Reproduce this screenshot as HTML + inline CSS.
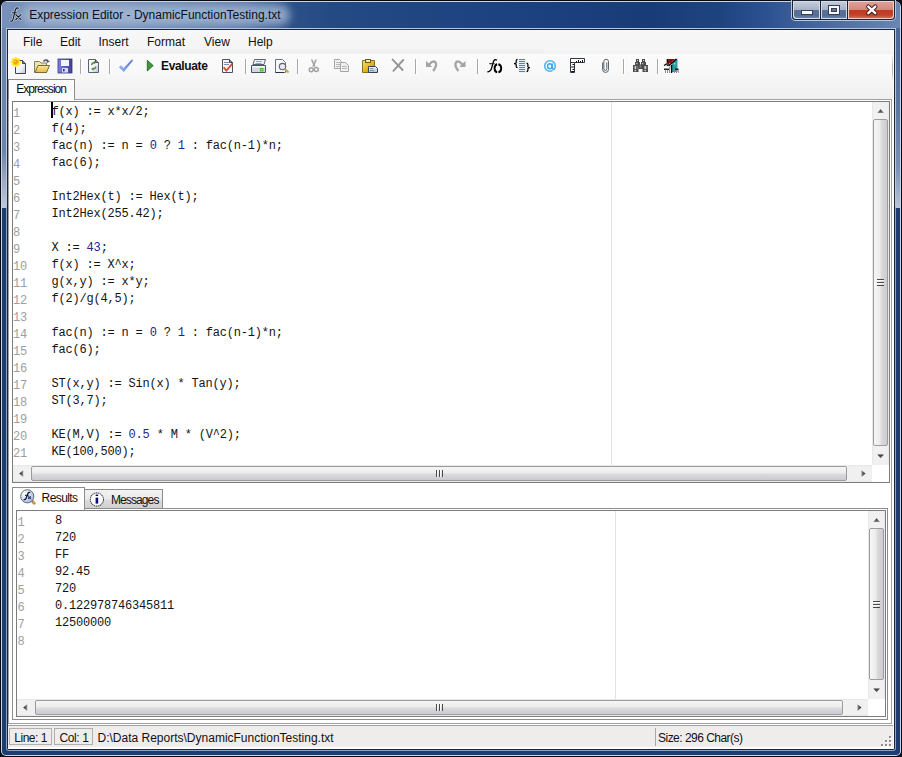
<!DOCTYPE html>
<html><head><meta charset="utf-8">
<style>
*{margin:0;padding:0;box-sizing:border-box}
html,body{width:902px;height:757px;overflow:hidden;background:#0b111c}
body{position:relative;font-family:"Liberation Sans",sans-serif;font-size:12px;color:#000}
.a{position:absolute}
.mono{font-family:"Liberation Mono",monospace}
.mono b{font-weight:normal;color:#24248a}
</style></head><body>
<!-- window frame -->
<div class="a" style="left:0;top:0;width:902px;height:757px;background:#05080e;border-radius:7px 7px 6px 6px"></div>
<div class="a" style="left:1px;top:1px;width:900px;height:755px;background:#c8d6ea;border-radius:6px 6px 5px 5px"></div>
<div class="a" id="fill" style="left:2px;top:2px;width:898px;height:753px;background:#1c3c72;border-radius:5px 5px 4px 4px;overflow:hidden">
  <div class="a" style="left:0;top:0;width:898px;height:206px;background:linear-gradient(180deg,#6e88b0 0px,#6a84aa 148px,#9ca8c0 178px,#bcc6da 205px)"></div>
  <div class="a" style="left:893px;top:26px;width:5px;height:180px;background:linear-gradient(180deg,#4a6898 0px,#5a78a4 80px,#7a92b8 140px,#a8b8d0 170px,#bcc6da 180px)"></div>
  <div class="a" style="left:0;top:0;width:898px;height:26px;background:linear-gradient(90deg,#7690b9 0px,#7690b9 120px,#5a78a8 240px,#2c5088 290px,#244a84 330px,#1c4280 500px,#183c78 650px,#1e4480 720px,#2a5090 760px,#3a5c98 790px,#6a86b2 898px)"></div>
  <div class="a" style="left:20px;top:3px;width:268px;height:20px;background:rgba(168,186,214,.8);border-radius:10px;filter:blur(4px)"></div>
</div>
<!-- inner frame lines -->
<div class="a" style="left:6px;top:28px;width:890px;height:723px;border-radius:0 0 3px 3px;background:linear-gradient(180deg,#b4c6de 0px,#bccae0 179px,#8aa4c8 180px,#8aa4c8 723px)"></div>
<div class="a" style="left:7px;top:29px;width:888px;height:721px;background:#1a2436;border-radius:0 0 2px 2px"></div>
<!-- title -->
<svg class="a" style="left:0;top:0" width="30" height="30" viewBox="0 0 30 30">
<g fill="none" stroke-linecap="round">
<path d="M18.4 8.2 Q17 7.4 15.8 9 Q15 10.5 14.2 14.5 Q13.2 19.5 12.4 20.6 Q11.6 21.6 10.6 21" stroke="#ffffff" stroke-opacity=".55" stroke-width="2.6"/>
<path d="M12.3 12.8 H16.4 M15.8 14.6 L21 19.6 M21 14.6 L15.8 19.6" stroke="#ffffff" stroke-opacity=".55" stroke-width="2.4"/>
<path d="M18.4 8.2 Q17 7.4 15.8 9 Q15 10.5 14.2 14.5 Q13.2 19.5 12.4 20.6 Q11.6 21.6 10.6 21" stroke="#101418" stroke-width="1.15"/>
<path d="M12.3 12.8 H16.4" stroke="#101418" stroke-width="1"/>
<path d="M15.8 14.6 L21 19.6 M21 14.6 L15.8 19.6" stroke="#101418" stroke-width="1.2"/>
</g></svg>
<div class="a" style="left:29.2px;top:7px;font-size:12px;line-height:16px;color:#0a0f1a;white-space:nowrap">Expression Editor - DynamicFunctionTesting.txt</div>
<!-- caption buttons -->
<svg class="a" id="caps" style="left:780px;top:0" width="122" height="24" viewBox="780 0 122 24">
<defs>
<linearGradient id="cb" x1="0" y1="0" x2="0" y2="1"><stop offset="0" stop-color="#c0cad8"/><stop offset="0.5" stop-color="#a4b2c6"/><stop offset="0.5" stop-color="#5a7298"/><stop offset="0.85" stop-color="#566e96"/><stop offset="1" stop-color="#6a84aa"/></linearGradient>
<linearGradient id="cr" x1="0" y1="0" x2="0" y2="1"><stop offset="0" stop-color="#e0a098"/><stop offset="0.5" stop-color="#d4867a"/><stop offset="0.5" stop-color="#c23a20"/><stop offset="0.8" stop-color="#c24028"/><stop offset="1" stop-color="#cc6a58"/></linearGradient>
</defs>
<path d="M791.5 0 V17 Q791.5 20.5 795 20.5 H891 Q895.5 20.5 895.5 16 V0" fill="none" stroke="#b8c8dc" stroke-width="1"/>
<path d="M792 0 H895 V16 Q895 20 891 20 H796 Q792 20 792 16 Z" fill="#1a2232"/>
<path d="M793 1 H820 V19 H796 Q793 19 793 16 Z" fill="#d4dce8"/>
<path d="M794 2 H819 V18 H797 Q794 18 794 15 Z" fill="url(#cb)"/>
<rect x="821" y="1" width="26" height="18" fill="#d4dce8"/>
<rect x="822" y="2" width="24" height="16" fill="url(#cb)"/>
<path d="M848 1 H894 V16 Q894 19 891 19 H848 Z" fill="#f0d0c8"/>
<path d="M849 2 H893 V15 Q893 18 890 18 H849 Z" fill="url(#cr)"/>
<rect x="801.5" y="10.5" width="11" height="4" fill="#f6f8fb" stroke="#34405a" stroke-width="1"/>
<rect x="828.5" y="5.5" width="11" height="9" fill="#f6f8fb" stroke="#34405a" stroke-width="1"/>
<rect x="831.5" y="8.5" width="5" height="3" fill="#6a7488" stroke="#34405a" stroke-width="1"/>
<path d="M868.3 6.6 L875.3 13.2 M875.3 6.6 L868.3 13.2" stroke="#3a1a18" stroke-width="4.2" stroke-linecap="round"/>
<path d="M868.3 6.6 L875.3 13.2 M875.3 6.6 L868.3 13.2" stroke="#fbfbfb" stroke-width="2.4" stroke-linecap="round"/>
</svg>
<!-- client -->
<div class="a" id="client" style="left:8px;top:30px;width:886px;height:719px;background:#fdfdfd;overflow:hidden"></div>
<!-- menu bar -->
<div class="a" style="left:8px;top:30px;width:885px;height:24px;background:linear-gradient(180deg,#f7f7f7 0px,#f5f5f5 19px,#f3f3f3 24px)"></div>
<div class="a" style="left:8px;top:49px;width:536px;height:5px;background:linear-gradient(180deg,#f2f2f2,#efefef)"></div>
<div class="a" style="left:8px;top:54px;width:885px;height:45px;background:linear-gradient(180deg,#fbfbfb 0px,#f8f8f8 18px,#f0f0f0 45px)"></div>
<div class="a" style="left:892px;top:56px;width:1px;height:24px;background:linear-gradient(180deg,#f0f0f0,#b8b8b8 40%,#b8b8b8 70%,#f0f0f0)"></div>
<div class="a" style="left:23px;top:35px;line-height:14px;color:#111">File</div>
<div class="a" style="left:60px;top:35px;line-height:14px;color:#111">Edit</div>
<div class="a" style="left:98.5px;top:35px;line-height:14px;color:#111">Insert</div>
<div class="a" style="left:147px;top:35px;line-height:14px;color:#111">Format</div>
<div class="a" style="left:204px;top:35px;line-height:14px;color:#111">View</div>
<div class="a" style="left:248px;top:35px;line-height:14px;color:#111">Help</div>
<!-- TOOLBAR -->
<svg class="a" style="left:0;top:0" width="902" height="100" viewBox="0 0 902 100">
<defs>
<linearGradient id="pg" x1="0" y1="0" x2="1" y2="1"><stop offset="0" stop-color="#ffffff"/><stop offset="0.6" stop-color="#f0f2fa"/><stop offset="1" stop-color="#b8bcd8"/></linearGradient>
<radialGradient id="sun" cx="0.5" cy="0.5" r="0.5"><stop offset="0" stop-color="#ffe060"/><stop offset="0.45" stop-color="#f0a000"/><stop offset="0.75" stop-color="#ffd820"/><stop offset="1" stop-color="#fff080" stop-opacity="0.3"/></radialGradient>
<linearGradient id="fold" x1="0" y1="0" x2="0" y2="1"><stop offset="0" stop-color="#f8e8a0"/><stop offset="1" stop-color="#e8b840"/></linearGradient>
<linearGradient id="flop" x1="0" y1="0" x2="1" y2="0"><stop offset="0" stop-color="#8080e8"/><stop offset="1" stop-color="#40409a"/></linearGradient>
<linearGradient id="chk" x1="0" y1="0" x2="1" y2="0"><stop offset="0" stop-color="#a0c0f8"/><stop offset="0.5" stop-color="#7098e8"/><stop offset="1" stop-color="#4068c8"/></linearGradient>
<linearGradient id="gold" x1="0" y1="0" x2="1" y2="1"><stop offset="0" stop-color="#f0e080"/><stop offset="0.5" stop-color="#e8b820"/><stop offset="1" stop-color="#b08010"/></linearGradient>
<linearGradient id="paper" x1="0" y1="0" x2="0" y2="1"><stop offset="0" stop-color="#f0f4fc"/><stop offset="1" stop-color="#b8c0d0"/></linearGradient>
</defs>
<!-- separators -->
<g fill="#a8a8a8"><rect x="80" y="59" width="1" height="15"/><rect x="109" y="59" width="1" height="15"/><rect x="245" y="59" width="1" height="15"/><rect x="297" y="59" width="1" height="15"/><rect x="415" y="59" width="1" height="15"/><rect x="477" y="59" width="1" height="15"/><rect x="623" y="59" width="1" height="15"/><rect x="657" y="59" width="1" height="15"/></g><g fill="#ffffff"><rect x="81" y="59" width="1" height="15"/><rect x="110" y="59" width="1" height="15"/><rect x="246" y="59" width="1" height="15"/><rect x="298" y="59" width="1" height="15"/><rect x="416" y="59" width="1" height="15"/><rect x="478" y="59" width="1" height="15"/><rect x="624" y="59" width="1" height="15"/><rect x="658" y="59" width="1" height="15"/></g>
<!-- new -->
<path d="M15.5 60.5 H22.5 L25.5 63.5 V73.5 H15.5 Z" fill="url(#pg)" stroke="#3c4454" stroke-width="1"/>
<path d="M22.5 60.5 V63.5 H25.5" fill="#7a8498" stroke="#3c4454" stroke-width="1"/>
<circle cx="15.8" cy="62.1" r="4.6" fill="#fff27a" opacity=".55"/><circle cx="19.70" cy="62.10" r="1.25" fill="#ffe830"/><circle cx="18.56" cy="64.86" r="1.25" fill="#ffe830"/><circle cx="15.80" cy="66.00" r="1.25" fill="#ffe830"/><circle cx="13.04" cy="64.86" r="1.25" fill="#ffe830"/><circle cx="11.90" cy="62.10" r="1.25" fill="#ffe830"/><circle cx="13.04" cy="59.34" r="1.25" fill="#ffe830"/><circle cx="15.80" cy="58.20" r="1.25" fill="#ffe830"/><circle cx="18.56" cy="59.34" r="1.25" fill="#ffe830"/><circle cx="15.8" cy="62.1" r="3" fill="#f8c010"/><circle cx="15.8" cy="62.1" r="1.8" fill="#f09a00"/><circle cx="15.2" cy="61.5" r="0.8" fill="#ffe070"/>
<!-- open -->
<path d="M34.5 61.5 H39.5 L41 63 H46.5 V72.5 H34.5 Z" fill="#ece4a8" stroke="#8a8058" stroke-width="1"/>
<path d="M35 72.5 L38 65.5 H49.5 L46.5 72.5 Z" fill="url(#fold)" stroke="#7a6838" stroke-width="1"/>
<path d="M43.5 61.5 Q45 59 47.5 60.5" fill="none" stroke="#505870" stroke-width="1.6"/>
<path d="M46.5 59 L49.8 61.5 L46.8 63 Z" fill="#505870"/>
<!-- save -->
<rect x="58" y="59" width="14" height="14" fill="url(#flop)"/>
<rect x="58" y="59" width="14" height="14" fill="none" stroke="#38387a" stroke-width="0.8"/>
<rect x="61" y="60" width="8" height="6" fill="#f4f6ff"/>
<rect x="62" y="68" width="6" height="4.5" fill="#d8dcf0"/>
<rect x="63" y="69" width="1.6" height="2.4" fill="#303070"/>
<!-- refresh doc -->
<path d="M88.5 59.5 H95.5 L98.5 62.5 V72.5 H88.5 Z" fill="url(#pg)" stroke="#5a6272" stroke-width="1"/>
<path d="M95.5 59.5 V62.5 H98.5" fill="#8a92a4" stroke="#4a5262" stroke-width="1"/>
<path d="M91.5 65 Q92 62.5 95 62.5" fill="none" stroke="#5a8a3a" stroke-width="1.3"/>
<path d="M94 60.8 L96.3 62.5 L94 64.2 Z" fill="#5a8a3a"/>
<path d="M96 66.5 Q95.5 69 92.5 69" fill="none" stroke="#5a8a3a" stroke-width="1.3"/>
<path d="M93.5 67.3 L91.2 69 L93.5 70.7 Z" fill="#5a8a3a"/>
<!-- check -->
<path d="M119.3 67.2 L123.8 71.6 L132.8 60.4 L131.8 59.8 L123.6 68.4 L121.2 65.8 Z" fill="url(#chk)" stroke="#6a8ad8" stroke-width="0.6"/>
<!-- play -->
<path d="M147.3 60.3 L153.2 65.6 L147.3 70.9 Z" fill="#3a9a3a" stroke="#1a5a1a" stroke-width="0.8"/>
<!-- doc red check -->
<path d="M222.5 59.5 H229.5 L232.5 62.5 V72.5 H222.5 Z" fill="#f6f8fc" stroke="#4a5262" stroke-width="1"/>
<path d="M229.5 59.5 V62.5 H232.5" fill="#8a92a4" stroke="#3a4252" stroke-width="1"/>
<rect x="224" y="62" width="5" height="0.9" fill="#7080a0"/><rect x="224" y="64" width="5" height="0.9" fill="#7080a0"/>
<path d="M223.6 67.3 L226.4 70.6 L232.4 63.6" fill="none" stroke="#d84a30" stroke-width="1.8"/>
<!-- printer -->
<path d="M254.5 59.5 H265.5 L264 64.5 H253 Z" fill="#f0f2f8" stroke="#5a6272" stroke-width="1"/>
<rect x="256" y="61" width="6" height="0.8" fill="#8090a8"/><rect x="255.5" y="63" width="6" height="0.8" fill="#8090a8"/>
<path d="M251.5 65.5 H265.5 V72.5 H251.5 Z" fill="#d0d8e4" stroke="#4a5262" stroke-width="1"/>
<rect x="252" y="66" width="13" height="1.5" fill="#f8f8fc"/>
<rect x="260" y="68" width="3.5" height="3.5" fill="#30c030"/>
<rect x="261" y="69" width="1.5" height="1.5" fill="#80ff80"/>
<!-- print preview -->
<path d="M275.5 59.5 H282.5 L285.5 62.5 V72.5 H275.5 Z" fill="#f6f8fc" stroke="#6a7282" stroke-width="1"/>
<path d="M275.5 72.5 H284" stroke="#2a3242" stroke-width="1"/>
<circle cx="282.5" cy="66.6" r="3.2" fill="#e6e8f4" stroke="#606470" stroke-width="1.1"/>
<path d="M284.8 69 L288.6 72.4" stroke="#c8a040" stroke-width="2"/>
<!-- scissors -->
<g stroke="#a2a2a2" fill="none">
<path d="M311.6 59.5 L314.8 66.5" stroke-width="1.6"/><path d="M316.2 59.5 L313 66.5" stroke-width="1.6"/>
<circle cx="311.2" cy="69.8" r="2" stroke-width="1.5"/><circle cx="316.3" cy="69.4" r="2" stroke-width="1.5"/>
</g>
<!-- copy -->
<g stroke="#a4a4a4" stroke-width="1">
<path d="M334.5 59.5 H339.5 L341.5 61.5 V68.5 H334.5 Z" fill="#f2f2f2"/>
<path d="M340.5 62.5 H345.5 L348.5 65.5 V71.5 H340.5 Z" fill="#f0f0f0"/>
</g>
<g fill="#b0b0b0"><rect x="336" y="62" width="4" height="0.9"/><rect x="336" y="64" width="4" height="0.9"/><rect x="336" y="66" width="4" height="0.9"/>
<rect x="342" y="66" width="5" height="0.9"/><rect x="342" y="68" width="5" height="0.9"/></g>
<!-- paste -->
<path d="M362.5 60.5 H374.5 V72.5 H362.5 Z" fill="url(#gold)" stroke="#8a7020" stroke-width="1"/>
<rect x="365.5" y="59.5" width="5" height="3" fill="#f0e8b0" stroke="#6a5a20" stroke-width="1"/>
<path d="M368.5 66.5 H375.5 L377.5 68.5 V72.5 H368.5 Z" fill="url(#paper)" stroke="#3a4252" stroke-width="1"/>
<rect x="370" y="68" width="3.5" height="0.8" fill="#6a7aa0"/><rect x="370" y="70" width="4" height="0.8" fill="#6a7aa0"/>
<!-- delete X -->
<path d="M392.6 59.6 L402.6 70 M403.2 60 L393.4 70.8" stroke="#959595" stroke-width="1.9" stroke-linecap="round" fill="none"/>
<!-- undo -->
<path d="M429 65 Q432.5 60 435.3 62.2 Q437.6 64.8 433.2 71" fill="none" stroke="#a4a4a4" stroke-width="2.3"/>
<path d="M426 60.8 V67 H432.2 Z" fill="#a4a4a4"/>
<!-- redo -->
<path d="M462.5 65 Q459 60 456.2 62.2 Q453.9 64.8 458.3 71" fill="none" stroke="#a4a4a4" stroke-width="2.3"/>
<path d="M465.5 60.8 V67 H459.3 Z" fill="#a4a4a4"/>
<!-- fx -->
<path d="M497 60.2 Q495 58.8 493.6 61.2 Q492.7 63.5 491.7 67.8 Q490.7 71.6 487.3 71.8" fill="none" stroke="#080808" stroke-width="1.35"/>
<path d="M489.2 63.7 H494.6" stroke="#202020" stroke-width="1.1"/>
<path d="M497.2 64.2 Q494.6 64.8 494.6 68.3 Q494.6 71.8 497.2 72.4" fill="none" stroke="#000" stroke-width="1.9"/>
<path d="M498.4 64.2 Q501.2 64.8 501.2 68.3 Q501.2 71.8 498.4 72.4" fill="none" stroke="#000" stroke-width="1.9"/>
<!-- braces list -->
<rect x="518.5" y="59" width="7" height="13.5" fill="#e4eefc"/>
<g fill="#6a7aa2"><rect x="519" y="59" width="6" height="1"/><rect x="519" y="61" width="6" height="1"/><rect x="519" y="63" width="6" height="1"/><rect x="519" y="65" width="6" height="1"/><rect x="519" y="67" width="6" height="1"/><rect x="519" y="69" width="6" height="1"/><rect x="519" y="71" width="6" height="1"/></g>
<path d="M517.6 59.4 Q516.2 59.4 516.2 61 V62.8 Q516.2 63.5 514 63.5 Q516.2 63.5 516.2 64.4 V66.4 Q516.2 67.6 517.6 67.6" fill="none" stroke="#000" stroke-width="1.25"/>
<path d="M526.5 63.2 Q527.9 63.2 527.9 64.6 V66.8 Q527.9 67.6 530 67.6 Q527.9 67.6 527.9 68.6 V70.2 Q527.9 71.6 526.5 71.6" fill="none" stroke="#000" stroke-width="1.25"/>
<!-- @ -->
<circle cx="550" cy="66" r="5.3" fill="none" stroke="#4cb6ea" stroke-width="1.6"/>
<ellipse cx="549.8" cy="66.2" rx="2.2" ry="2.5" fill="none" stroke="#42a8e0" stroke-width="1.4"/>
<path d="M552.4 63.4 V68 Q552.6 69.4 554.6 69" fill="none" stroke="#42a8e0" stroke-width="1.3"/>
<rect x="552.6" y="70.2" width="3.6" height="2" fill="#f6f6f6"/>
<!-- ruler -->
<path d="M570.5 58.5 H584.5 V62.5 H574.5 V72.5 H570.5 Z" fill="#fff" stroke="#303846" stroke-width="1"/>
<path d="M570.5 62.5 H574.5" stroke="#303846" stroke-width="1"/>
<g fill="#101010"><rect x="576" y="61" width="1" height="1.2"/><rect x="578" y="60" width="1" height="2.2"/><rect x="580" y="61" width="1" height="1.2"/><rect x="582" y="60" width="1" height="2.2"/>
<rect x="572.5" y="64" width="1.6" height="1"/><rect x="571.2" y="66.5" width="2.9" height="1"/><rect x="572.5" y="69" width="1.6" height="1"/><rect x="571.2" y="71" width="2.9" height="1"/></g>
<!-- paperclip -->
<path d="M602.6 62.5 V69.6 Q602.6 72.4 605.6 72.4 Q608.5 72.4 608.5 69.6 V61.6 Q608.5 59.3 606.1 59.3 Q603.8 59.3 603.8 61.6 V68.8 Q603.8 70.4 605.4 70.4 Q606.8 70.4 606.8 68.8 V62.4" fill="none" stroke="#505868" stroke-width="0.95"/>
<!-- binoculars -->
<g fill="#4c4c4c">
<rect x="636" y="59" width="3" height="4"/><rect x="642" y="59" width="3" height="4"/>
<rect x="635" y="62" width="5" height="4"/><rect x="641" y="62" width="5" height="4"/>
<rect x="633" y="65" width="5.5" height="7"/><rect x="642.5" y="65" width="5.5" height="7"/>
<rect x="638" y="64.5" width="5" height="4.5"/>
</g>
<g fill="#d0d0d0"><rect x="637" y="60" width="1" height="1"/><rect x="643" y="60" width="1" height="1"/>
<rect x="634.6" y="66" width="1.6" height="3.2"/><rect x="644.4" y="66" width="1.6" height="3.2"/>
<rect x="634.6" y="70" width="1.6" height="1.2"/><rect x="644.4" y="70" width="1.6" height="1.2"/>
<rect x="636.2" y="63" width="1.2" height="1.2"/><rect x="642.2" y="63" width="1.2" height="1.2"/></g>
<g fill="#8a8a8a"><rect x="639.6" y="65.5" width="1.6" height="2"/><rect x="637.5" y="66" width="0.8" height="3"/><rect x="646.5" y="66" width="0.8" height="3"/></g>
<!-- last icon -->
<path d="M667 59 H675 L670.5 63.5 H667 Z" fill="#8a0c10"/>
<path d="M676 59 H677.5 V72 H672 V64 Z" fill="#2a9ea0"/>
<path d="M676.5 59 L668.5 66" fill="none" stroke="#050505" stroke-width="1.6"/>
<path d="M667.3 59 V66" stroke="#050505" stroke-width="1.2"/>
<path d="M664 65.5 L666.5 64 H669" fill="none" stroke="#050505" stroke-width="1.3"/>
<rect x="666" y="63.6" width="2.4" height="0.8" fill="#60b090"/>
<rect x="674" y="63" width="1.4" height="1.4" fill="#80e8e8"/>
<path d="M671.6 65 V73" stroke="#050505" stroke-width="1.3"/>
<rect x="664" y="68.6" width="5" height="1.3" fill="#050505"/><rect x="675" y="68.6" width="3.5" height="1.3" fill="#050505"/>
<g fill="#8e8e8e"><rect x="665" y="69.8" width="1" height="3.2"/><rect x="667" y="69.8" width="1" height="3.2"/><rect x="669" y="67" width="1" height="6"/><rect x="674" y="69.8" width="1" height="3.2"/><rect x="676" y="69.8" width="1" height="3.2"/><rect x="678" y="69.8" width="0.8" height="3.2"/></g>
<rect x="669.6" y="66" width="1.2" height="3" fill="#e0b0c0"/>
</svg>
<div class="a" style="left:161px;top:59px;line-height:14px;font-weight:bold;color:#101010;letter-spacing:-0.35px">Evaluate</div>

<!-- outer tab -->
<div class="a" style="left:8px;top:79px;width:67px;height:21px;border:1px solid #8c8c8c;border-bottom:0;background:#fcfcfc"></div>
<div class="a" style="left:16.2px;top:82px;line-height:14px;color:#111;letter-spacing:-0.95px">Expression</div>
<div class="a" style="left:8px;top:99px;width:884px;height:625px;border:1px solid #a0a0a0;border-left:0;background:#fff"></div>
<div class="a" style="left:8px;top:99px;width:1px;height:625px;background:#a0a0a0"></div>
<div class="a" style="left:9px;top:99px;width:65px;height:1px;background:#fff"></div>
<!-- editor -->
<div class="a" id="ed" style="left:12px;top:101px;width:878px;height:382px;border:1px solid #7c7c7c;background:#fff;overflow:hidden">
  <div class="a" style="left:598px;top:0;width:1px;height:364px;background:#e3e3e3"></div>
  <div class="a mono" id="gut" style="left:0px;top:4px;width:30px;color:#9e9e9e;font-size:12px;line-height:17px;letter-spacing:-0.2px">1<br>2<br>3<br>4<br>5<br>6<br>7<br>8<br>9<br>10<br>11<br>12<br>13<br>14<br>15<br>16<br>17<br>18<br>19<br>20<br>21</div>
  <div class="a mono" id="code" style="left:38.6px;top:2px;color:#141414;font-size:12px;line-height:17px;letter-spacing:-0.2px;white-space:pre">f(x) := x*x/2;
f(4);
fac(n) := n = <b>0</b> ? <b>1</b> : fac(n-1)*n;
fac(6);

Int2Hex(t) := Hex(t);
Int2Hex(255.42);

X := <b>43</b>;
f(x) := X^x;
g(x,y) := x*y;
f(2)/g(4,5);

fac(n) := n = <b>0</b> ? <b>1</b> : fac(n-1)*n;
fac(6);

ST(x,y) := Sin(x) * Tan(y);
ST(3,7);

KE(M,V) := <b>0.5</b> * M * (V^2);
KE(100,500);</div>
  <div class="a" style="left:38px;top:0px;width:2px;height:16px;background:#000"></div>
</div>
<div id="edscroll"></div>
<div class="a" style="left:872px;top:102px;width:17px;height:363px;background:linear-gradient(90deg,#e6e6e6 0px,#f1f1f1 2px,#f0f0f0 15px,#e8e8e8 17px)"></div>
<svg class="a" style="left:872px;top:102px" width="17" height="17"><defs><linearGradient id="e1u" x1="0" y1="0" x2="0" y2="1"><stop offset="0" stop-color="#202020"/><stop offset="1" stop-color="#8a8a8a"/></linearGradient></defs><path d="M5.3 11 L8.6 7.2 L11.9 11 Z" fill="url(#e1u)"/></svg>
<svg class="a" style="left:872px;top:448px" width="17" height="17"><defs><linearGradient id="e1d" x1="0" y1="0" x2="0" y2="1"><stop offset="0" stop-color="#303030"/><stop offset="1" stop-color="#7a7a7a"/></linearGradient></defs><path d="M5.3 6.5 L8.6 10.3 L11.9 6.5 Z" fill="url(#e1d)"/></svg>
<div class="a" style="left:873px;top:119px;width:15px;height:327px;border:1px solid #9c9c9c;border-radius:2px;background:linear-gradient(90deg,#f6f6f6 0px,#ececec 6px,#dcdcdc 7px,#cacad2 13px)"></div>
<svg class="a" style="left:872px;top:278px" width="17" height="8"><g fill="#4a4a4a"><rect x="5" y="1" width="7" height="1"/><rect x="5" y="4" width="7" height="1"/><rect x="5" y="7" width="7" height="1"/></g><g fill="#ffffff" opacity=".8"><rect x="5" y="2" width="7" height="1"/><rect x="5" y="5" width="7" height="1"/></g></svg>
<div class="a" style="left:13px;top:465px;width:859px;height:17px;background:linear-gradient(180deg,#e6e6e6 0px,#f1f1f1 2px,#f0f0f0 15px,#e8e8e8 17px)"></div>
<svg class="a" style="left:13px;top:465px" width="17" height="17"><defs><linearGradient id="e2l" x1="0" y1="0" x2="1" y2="0"><stop offset="0" stop-color="#202020"/><stop offset="1" stop-color="#8a8a8a"/></linearGradient></defs><path d="M10.2 5.2 L6.2 8.6 L10.2 12 Z" fill="url(#e2l)"/></svg>
<svg class="a" style="left:855px;top:465px" width="17" height="17"><defs><linearGradient id="e2r" x1="1" y1="0" x2="0" y2="0"><stop offset="0" stop-color="#202020"/><stop offset="1" stop-color="#8a8a8a"/></linearGradient></defs><path d="M6.5 5.2 L10.5 8.6 L6.5 12 Z" fill="url(#e2r)"/></svg>
<div class="a" style="left:31px;top:466px;width:816px;height:15px;border:1px solid #9c9c9c;border-radius:2px;background:linear-gradient(180deg,#f6f6f6 0px,#ececec 6px,#dcdcdc 7px,#cacad2 13px)"></div>
<svg class="a" style="left:435px;top:465px" width="8" height="17"><g fill="#4a4a4a"><rect x="1" y="5" width="1" height="7"/><rect x="4" y="5" width="1" height="7"/><rect x="7" y="5" width="1" height="7"/></g><g fill="#ffffff" opacity=".8"><rect x="2" y="5" width="1" height="7"/><rect x="5" y="5" width="1" height="7"/></g></svg>
<div class="a" style="left:872px;top:465px;width:17px;height:17px;background:#fff"></div>
<!--/edscroll-->
<!-- results tabs -->
<div class="a" style="left:84px;top:489px;width:79px;height:20px;border:1px solid #8c8c8c;border-bottom:0;background:linear-gradient(180deg,#f2f2f2 0px,#ebebeb 9px,#dcdcdc 10px,#cfcfcf 19px)"></div>
<div class="a" style="left:12px;top:487px;width:73px;height:23px;border:1px solid #8c8c8c;border-bottom:0;background:#fff"></div>
<div class="a" style="left:12px;top:508px;width:876px;height:212px;border:1px solid #8c8c8c;border-top:0;"></div>
<div class="a" style="left:85px;top:508px;width:803px;height:1px;background:#8c8c8c"></div>
<div class="a" style="left:41.6px;top:491px;line-height:14px;color:#111;letter-spacing:-0.6px">Results</div>
<div class="a" style="left:111px;top:493px;line-height:14px;color:#111;letter-spacing:-0.9px">Messages</div>
<div id="resicons"></div>
<svg class="a" style="left:0;top:480px" width="120" height="30" viewBox="0 480 120 30">
<defs><radialGradient id="gl" cx="0.3" cy="0.3" r="0.8"><stop offset="0" stop-color="#ffffff"/><stop offset="0.5" stop-color="#d4e0f8"/><stop offset="1" stop-color="#98b0e8"/></radialGradient></defs>
<circle cx="27.3" cy="496.3" r="6.6" fill="url(#gl)" stroke="#6a6e78" stroke-width="1"/>
<path d="M30.2 492.6 Q29 491.8 28 493.2 L26 498.5 Q25.2 500 23.6 499.6" fill="none" stroke="#101820" stroke-width="1.3"/>
<path d="M25 495.3 H28.6" stroke="#101820" stroke-width="1"/>
<path d="M28 496.4 L30.8 498.8 M30.8 496.4 L28 498.8" stroke="#1a2460" stroke-width="1.1"/>
<path d="M32.6 501.6 L34.2 503.2" stroke="#a88040" stroke-width="2.8" stroke-linecap="round"/><circle cx="33.8" cy="502.6" r="0.8" fill="#e8c888"/>
<circle cx="96.9" cy="499.5" r="6.6" fill="#fdfdfd" stroke="#4a4a4a" stroke-width="1.1" stroke-dasharray="1.4 0.6"/>
<rect x="95.6" y="494.4" width="2.6" height="1.7" rx="0.6" fill="#0a0a80"/>
<rect x="95.6" y="497.6" width="2.6" height="6" fill="#0a0a90"/>
</svg>
<!-- results box -->
<div class="a" id="res" style="left:16px;top:510px;width:870px;height:207px;border:1px solid #7c7c7c;background:#fff;overflow:hidden">
  <div class="a" style="left:598px;top:0;width:1px;height:189px;background:#e3e3e3"></div>
  <div class="a mono" id="gut2" style="left:0.4px;top:4px;width:30px;color:#9e9e9e;font-size:12px;line-height:17px;letter-spacing:-0.2px">1<br>2<br>3<br>4<br>5<br>6<br>7<br>8</div>
  <div class="a mono" id="code2" style="left:38px;top:2px;color:#141414;font-size:12px;line-height:17px;letter-spacing:-0.2px;white-space:pre">8
720
FF
92.45
720
0.122978746345811
12500000</div>
</div>
<div id="resscroll"></div>
<div class="a" style="left:868px;top:511px;width:17px;height:188px;background:linear-gradient(90deg,#e6e6e6 0px,#f1f1f1 2px,#f0f0f0 15px,#e8e8e8 17px)"></div>
<svg class="a" style="left:868px;top:511px" width="17" height="17"><defs><linearGradient id="r1u" x1="0" y1="0" x2="0" y2="1"><stop offset="0" stop-color="#202020"/><stop offset="1" stop-color="#8a8a8a"/></linearGradient></defs><path d="M5.3 11 L8.6 7.2 L11.9 11 Z" fill="url(#r1u)"/></svg>
<svg class="a" style="left:868px;top:682px" width="17" height="17"><defs><linearGradient id="r1d" x1="0" y1="0" x2="0" y2="1"><stop offset="0" stop-color="#303030"/><stop offset="1" stop-color="#7a7a7a"/></linearGradient></defs><path d="M5.3 6.5 L8.6 10.3 L11.9 6.5 Z" fill="url(#r1d)"/></svg>
<div class="a" style="left:869px;top:528px;width:15px;height:152px;border:1px solid #9c9c9c;border-radius:2px;background:linear-gradient(90deg,#f6f6f6 0px,#ececec 6px,#dcdcdc 7px,#cacad2 13px)"></div>
<svg class="a" style="left:868px;top:600px" width="17" height="8"><g fill="#4a4a4a"><rect x="5" y="1" width="7" height="1"/><rect x="5" y="4" width="7" height="1"/><rect x="5" y="7" width="7" height="1"/></g><g fill="#ffffff" opacity=".8"><rect x="5" y="2" width="7" height="1"/><rect x="5" y="5" width="7" height="1"/></g></svg>
<div class="a" style="left:17px;top:699px;width:851px;height:17px;background:linear-gradient(180deg,#e6e6e6 0px,#f1f1f1 2px,#f0f0f0 15px,#e8e8e8 17px)"></div>
<svg class="a" style="left:17px;top:699px" width="17" height="17"><defs><linearGradient id="r2l" x1="0" y1="0" x2="1" y2="0"><stop offset="0" stop-color="#202020"/><stop offset="1" stop-color="#8a8a8a"/></linearGradient></defs><path d="M10.2 5.2 L6.2 8.6 L10.2 12 Z" fill="url(#r2l)"/></svg>
<svg class="a" style="left:851px;top:699px" width="17" height="17"><defs><linearGradient id="r2r" x1="1" y1="0" x2="0" y2="0"><stop offset="0" stop-color="#202020"/><stop offset="1" stop-color="#8a8a8a"/></linearGradient></defs><path d="M6.5 5.2 L10.5 8.6 L6.5 12 Z" fill="url(#r2r)"/></svg>
<div class="a" style="left:35px;top:700px;width:808px;height:15px;border:1px solid #9c9c9c;border-radius:2px;background:linear-gradient(180deg,#f6f6f6 0px,#ececec 6px,#dcdcdc 7px,#cacad2 13px)"></div>
<svg class="a" style="left:435px;top:699px" width="8" height="17"><g fill="#4a4a4a"><rect x="1" y="5" width="1" height="7"/><rect x="4" y="5" width="1" height="7"/><rect x="7" y="5" width="1" height="7"/></g><g fill="#ffffff" opacity=".8"><rect x="2" y="5" width="1" height="7"/><rect x="5" y="5" width="1" height="7"/></g></svg>
<div class="a" style="left:868px;top:699px;width:17px;height:17px;background:#fff"></div>
<!--/resscroll-->
<!-- status bar -->
<div class="a" style="left:8px;top:725px;width:885px;height:1px;background:#a0a0a0"></div>
<div class="a" style="left:8px;top:726px;width:885px;height:21px;background:#efedeb"></div>
<div class="a" style="left:8px;top:747px;width:886px;height:2px;background:#fdfdfd"></div>
<div class="a" style="left:9px;top:728px;width:43px;height:17px;border:1px solid #b0b0b0"></div>
<div class="a" style="left:54px;top:728px;width:39px;height:17px;border:1px solid #b0b0b0"></div>
<div class="a" style="left:14.2px;top:731px;line-height:14px;color:#111;letter-spacing:-0.45px">Line: 1</div>
<div class="a" style="left:59.5px;top:731px;line-height:14px;color:#111;letter-spacing:-0.4px">Col: 1</div>
<div class="a" style="left:97.5px;top:731px;line-height:14px;color:#111">D:\Data Reports\DynamicFunctionTesting.txt</div>
<div class="a" style="left:655px;top:728px;width:1px;height:18px;background:#a8a8a8"></div>
<div class="a" style="left:658px;top:731px;line-height:14px;color:#111;letter-spacing:-0.52px">Size: 296 Char(s)</div>
<div id="grip"></div>
<svg class="a" style="left:878px;top:733px" width="14" height="14" viewBox="878 733 14 14">
<g fill="#ffffff"><rect x="890" y="737" width="2" height="2"/><rect x="886" y="741" width="2" height="2"/><rect x="890" y="741" width="2" height="2"/><rect x="882" y="745" width="2" height="2"/><rect x="886" y="745" width="2" height="2"/><rect x="890" y="745" width="2" height="2"/></g>
<g fill="#8e8e8e"><rect x="889" y="736" width="2" height="2"/><rect x="885" y="740" width="2" height="2"/><rect x="889" y="740" width="2" height="2"/><rect x="881" y="744" width="2" height="2"/><rect x="885" y="744" width="2" height="2"/><rect x="889" y="744" width="2" height="2"/></g>
</svg>
</body></html>
